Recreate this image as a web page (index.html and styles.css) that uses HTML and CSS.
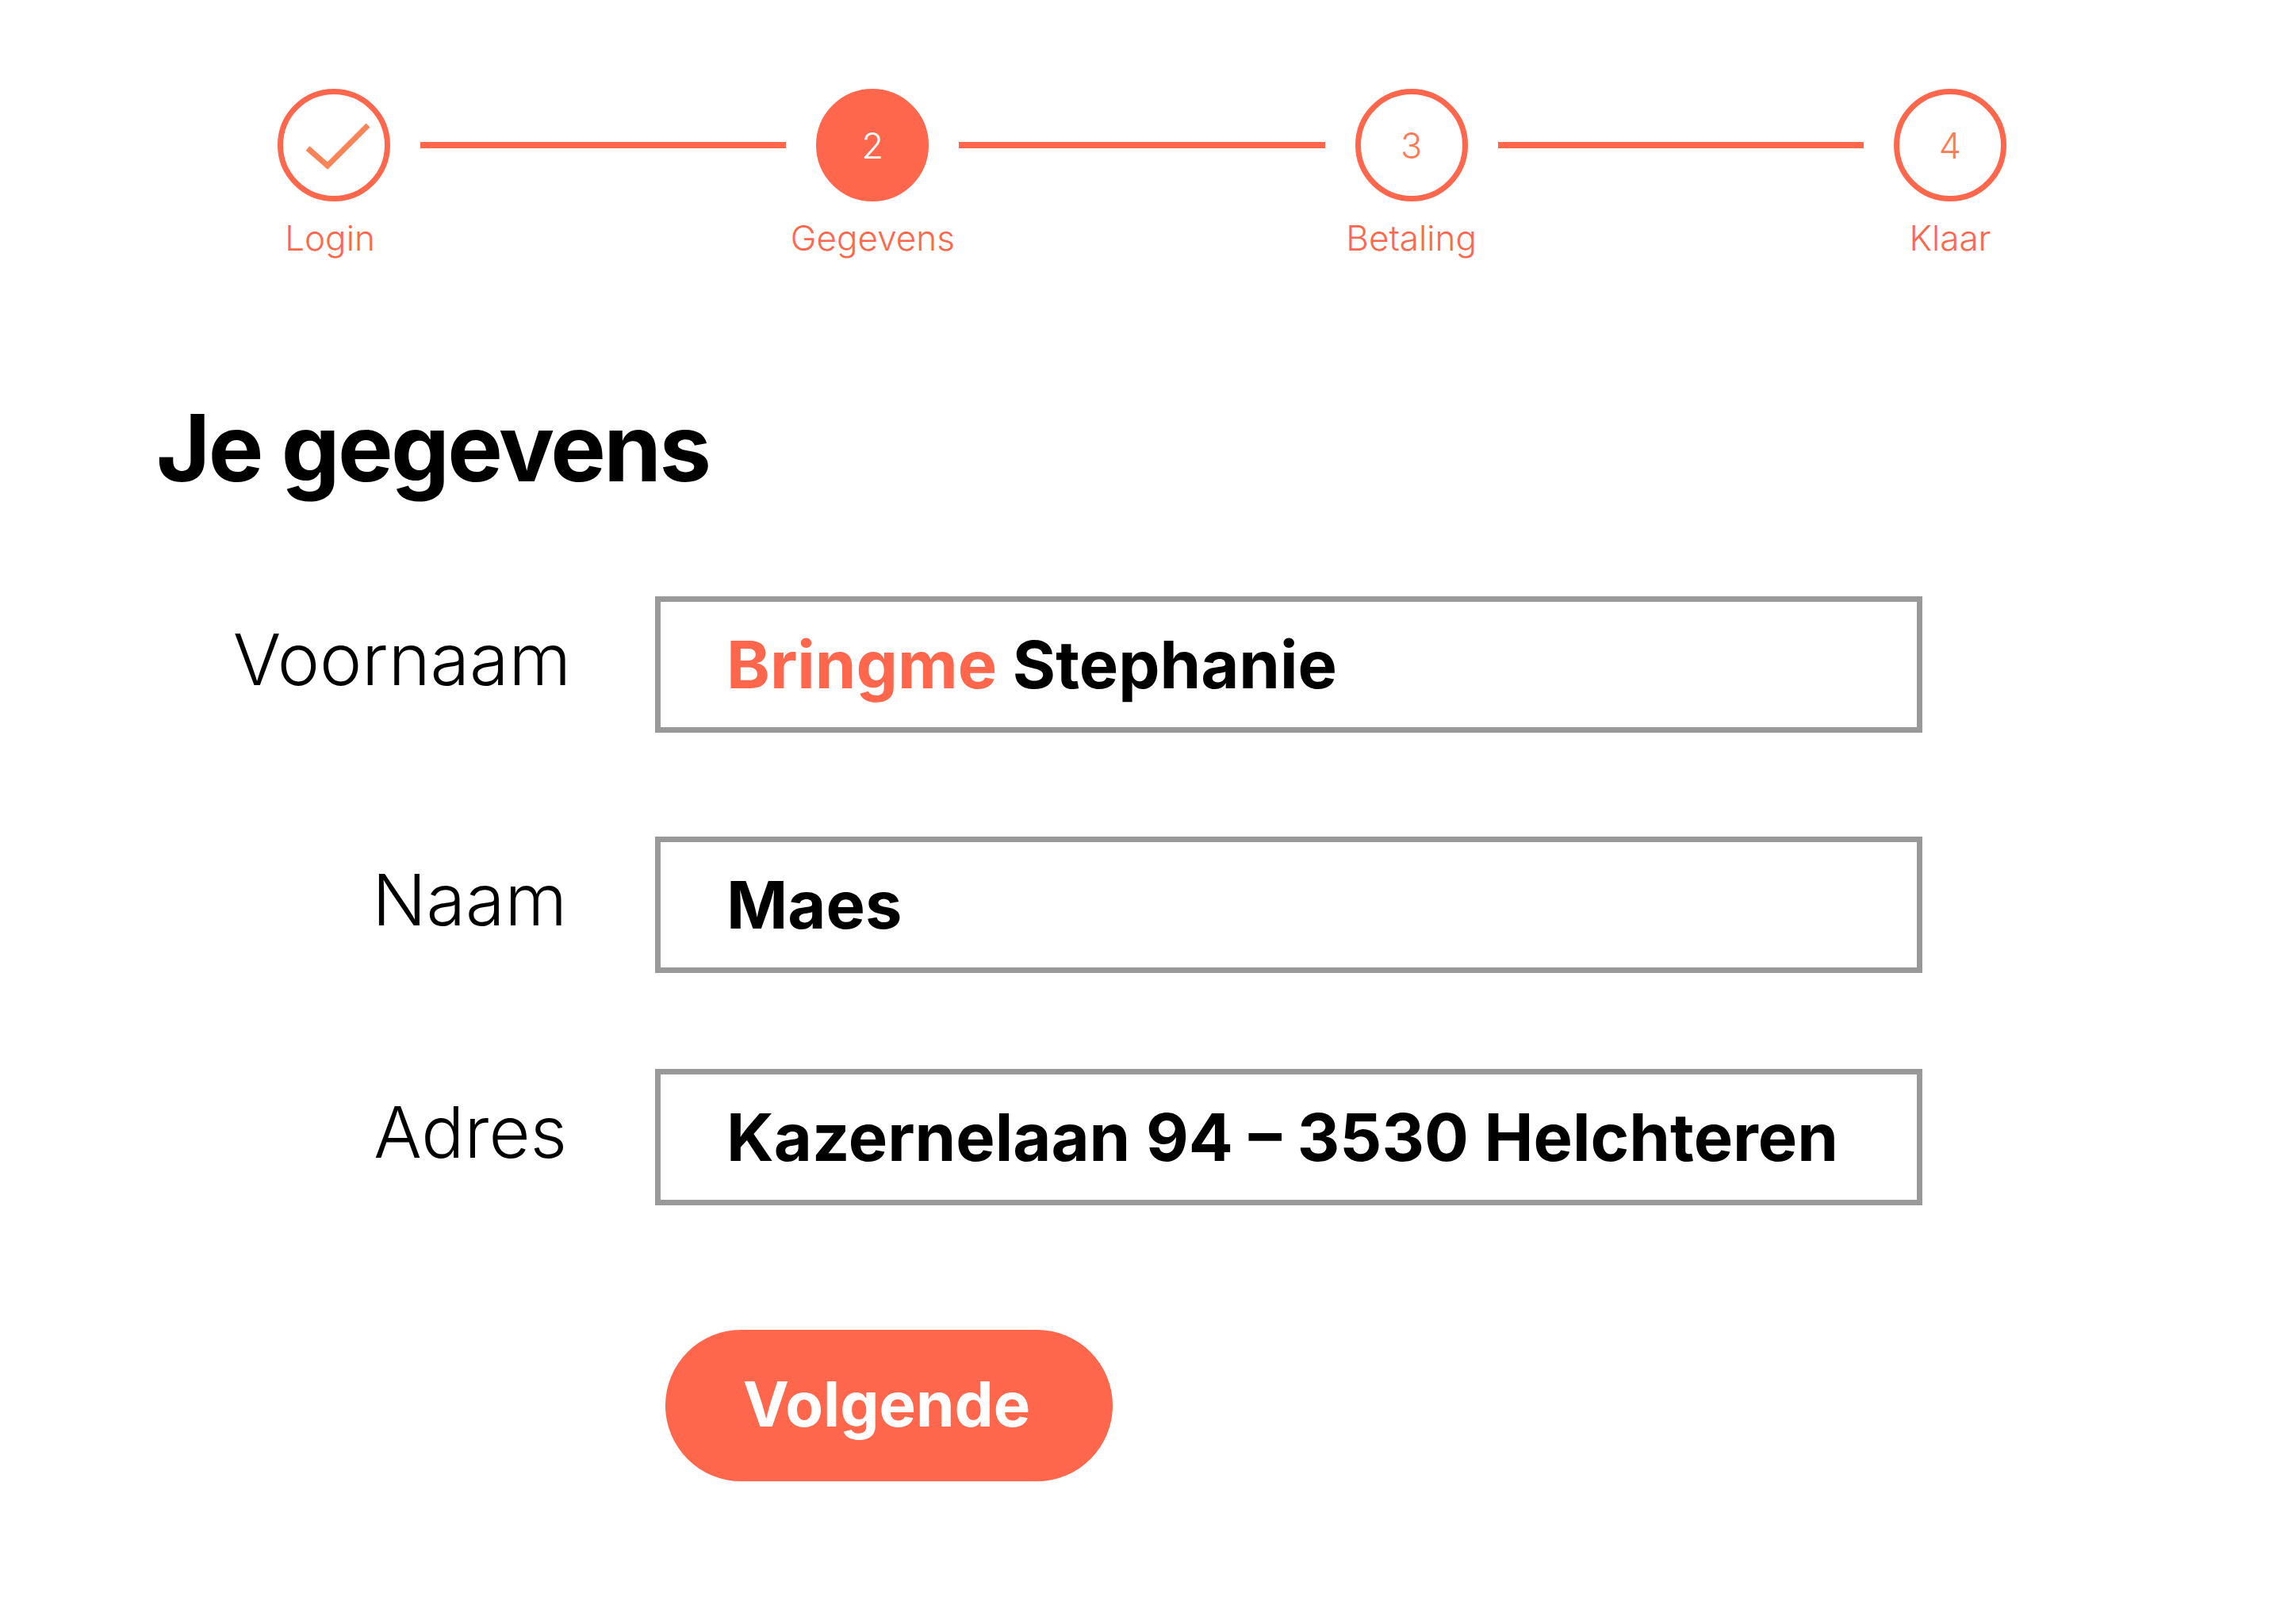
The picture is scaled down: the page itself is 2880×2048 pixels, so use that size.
FILE: index.html
```html
<!DOCTYPE html>
<html lang="nl">
<head>
    <meta charset="UTF-8">
    <meta name="viewport" content="width=device-width, initial-scale=1.0">
    <title>Je gegevens</title>
    <link rel="stylesheet" href="styles.css">
</head>
<body>
    <div class="stepper">
        <div class="step step-login">
            <div class="step-circle">
                <svg class="check" viewBox="0 0 128 128">
                    <polyline points="31,68 56,90 107,39"></polyline>
                </svg>
            </div>
            <span class="step-label">Login</span>
        </div>
        <div class="step-line"></div>
        <div class="step">
            <div class="step-circle active">2</div>
            <span class="step-label">Gegevens</span>
        </div>
        <div class="step-line"></div>
        <div class="step">
            <div class="step-circle">3</div>
            <span class="step-label">Betaling</span>
        </div>
        <div class="step-line"></div>
        <div class="step">
            <div class="step-circle">4</div>
            <span class="step-label">Klaar</span>
        </div>
    </div>

    <h1>Je gegevens</h1>

    <form class="form">
        <div class="row">
            <label class="row-label label-first">Voornaam</label>
            <div class="field"><span class="accent">Bringme</span> Stephanie</div>
        </div>
        <div class="row row-name">
            <label class="row-label">Naam</label>
            <div class="field">Maes</div>
        </div>
        <div class="row row-address">
            <label class="row-label">Adres</label>
            <div class="field">Kazernelaan 94 – 3530 Helchteren</div>
        </div>
        <button class="btn" type="button">Volgende</button>
    </form>
</body>
</html>
```

FILE: styles.css
```css
* {
    box-sizing: border-box;
    margin: 0;
    padding: 0;
    font-family: Inter, 'Noto Sans', sans-serif;
}

body {
    background-color: #ffffff;
    color: #000000;
    height: 2048px;
    overflow: hidden;
}

.stepper {
    display: flex;
    align-items: flex-start;
    gap: 38px;
    width: 2180px;
    margin: 112px 0 0 350px;
}

.step {
    display: flex;
    flex-direction: column;
    align-items: center;
    width: 142px;
}

.step-circle {
    display: flex;
    align-items: center;
    justify-content: center;
    width: 142px;
    height: 142px;
    flex-shrink: 0;
    border: 7px solid #ff674d;
    border-radius: 50%;
    color: #ff7a55;
    font-size: 45px;
    font-weight: 300;
}

.step-circle.active {
    background-color: #ff674d;
    color: #ffffff;
}

.check {
    width: 128px;
    height: 128px;
}

.check polyline {
    fill: none;
    stroke: #fb8358;
    stroke-width: 7;
}

.step-label {
    margin-top: 20px;
    color: #ff674d;
    font-size: 44px;
    line-height: 52px;
    font-weight: 300;
    white-space: nowrap;
}

.step-login .step-label {
    margin-right: 10px;
}

.step-line {
    flex: 1;
    height: 8px;
    margin-top: 67px;
    background-color: #ff674d;
}

h1 {
    margin: 169px 0 0 197px;
    font-size: 117px;
    line-height: 140px;
    font-weight: 700;
    letter-spacing: -2.7px;
}

.form {
    display: flex;
    flex-direction: column;
    align-items: flex-start;
    margin-top: 117px;
}

.row {
    display: grid;
    grid-template-columns: 715px 1598px;
    column-gap: 111px;
    align-items: center;
}

.row-name {
    margin-top: 131px;
}

.row-address {
    margin-top: 121px;
}

.row-label {
    text-align: right;
    font-size: 90px;
    line-height: 100px;
    font-weight: 300;
    margin-bottom: 12px;
}

.label-first {
    margin-right: -5px;
}

.field {
    height: 172px;
    padding-left: 83px;
    border: 7px solid #999999;
    font-size: 83px;
    line-height: 158px;
    font-weight: 700;
    white-space: nowrap;
}

.accent {
    color: #ff674d;
}

.btn {
    width: 564px;
    height: 191px;
    padding: 0 6px 4px 0;
    margin: 157px 0 0 839px;
    background-color: #ff674d;
    color: #ffffff;
    border: none;
    border-radius: 96px;
    font-size: 78px;
    font-weight: 700;
}
```
